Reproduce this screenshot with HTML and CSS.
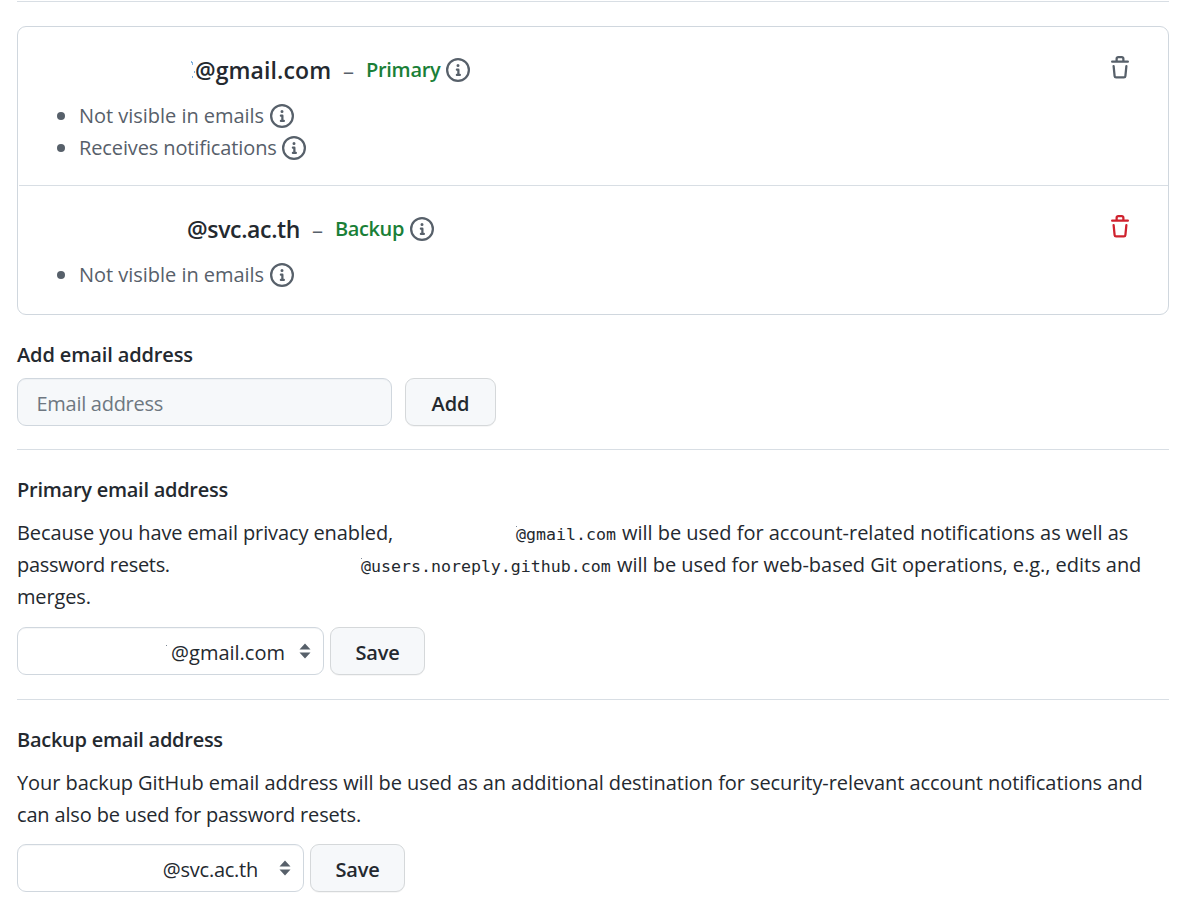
FILE: index.html
```
<!DOCTYPE html>
<html lang="en">
<head>
<meta charset="utf-8">
<title>Email settings</title>
<link rel="stylesheet" href="styles.css">
</head>
<body>
<svg class="symbols" aria-hidden="true">
  <symbol id="info" viewBox="0 0 16 16"><path d="M0 8a8 8 0 1 1 16 0A8 8 0 0 1 0 8Zm8-6.5a6.5 6.5 0 1 0 0 13 6.5 6.5 0 0 0 0-13ZM6.5 7.75A.75.75 0 0 1 7.25 7h1a.75.75 0 0 1 .75.75v2.75h.25a.75.75 0 0 1 0 1.5h-2a.75.75 0 0 1 0-1.5h.25v-2h-.25a.75.75 0 0 1-.75-.75ZM8 6a1 1 0 1 1 0-2 1 1 0 0 1 0 2Z"/></symbol>
  <symbol id="trash" viewBox="0 0 16 16"><path d="M11 1.75V3h2.25a.75.75 0 0 1 0 1.5H2.75a.75.75 0 0 1 0-1.5H5V1.75C5 .784 5.784 0 6.75 0h2.5C10.216 0 11 .784 11 1.75ZM4.496 6.675l.66 6.6a.25.25 0 0 0 .249.225h5.19a.25.25 0 0 0 .249-.225l.66-6.6a.75.75 0 0 1 1.492.149l-.66 6.6A1.748 1.748 0 0 1 10.595 15h-5.19a1.75 1.75 0 0 1-1.741-1.575l-.66-6.6a.75.75 0 1 1 1.492-.15ZM6.5 1.75V3h3V1.75a.25.25 0 0 0-.25-.25h-2.5a.25.25 0 0 0-.25.25Z"/></symbol>
  <symbol id="sort" viewBox="0 0 12 16"><path d="M6 0.5 11.5 6.5H0.5ZM0.5 9.5h11L6 15.5Z"/></symbol>
</svg>
<main class="settings">
  <ul class="emails">
    <li class="email">
      <div class="email-head">
        <svg class="speck speck-title" viewBox="0 0 4 20"><path d="M0 1h1v2H0zM1 2h1v3H1zM3 11h1v2H3zM1 16h1v2H1z"/></svg>
        <span class="address address-gmail">@gmail.com</span>
        <span class="dash">–</span>
        <span class="tag tag-primary">Primary</span>
        <svg class="icon"><use href="#info"/></svg>
        <button class="delete" type="button" aria-label="Delete" disabled><svg class="icon"><use href="#trash"/></svg></button>
      </div>
      <ul class="facts">
        <li><span class="fact fact-visible">Not visible in emails</span><svg class="icon"><use href="#info"/></svg></li>
        <li><span class="fact fact-receives">Receives notifications</span><svg class="icon"><use href="#info"/></svg></li>
      </ul>
    </li>
    <li class="email">
      <div class="email-head">
        <span class="address address-svc">@svc.ac.th</span>
        <span class="dash">–</span>
        <span class="tag tag-backup">Backup</span>
        <svg class="icon"><use href="#info"/></svg>
        <button class="delete danger" type="button" aria-label="Delete"><svg class="icon"><use href="#trash"/></svg></button>
      </div>
      <ul class="facts">
        <li><span class="fact fact-visible">Not visible in emails</span><svg class="icon"><use href="#info"/></svg></li>
      </ul>
    </li>
  </ul>

  <section class="add">
    <h2 class="title-add">Add email address</h2>
    <div class="controls controls-add">
      <input class="field" type="text" placeholder="Email address">
      <button class="btn btn-add" type="button">Add</button>
    </div>
  </section>

  <section class="block">
    <h2 class="title-primary">Primary email address</h2>
    <p class="text"><span class="t1">Because you have email privacy enabled,</span><code class="c1">@gmail.com</code><span class="t2">will be used for account-related notifications as well as</span><br><span class="t3">password resets.</span><code class="c2">@users.noreply.github.com</code><span class="t4">will be used for web-based Git operations, e.g., edits and</span><br><span class="t5">merges.</span></p>
    <div class="controls">
      <div class="select select-gmail"><i class="dot"></i><span class="value">@gmail.com</span><svg class="sort"><use href="#sort"/></svg></div>
      <button class="btn btn-save" type="button">Save</button>
    </div>
  </section>

  <section class="block">
    <h2 class="title-backup">Backup email address</h2>
    <p class="text text-backup"><span class="t6">Your backup GitHub email address will be used as an additional destination for security-relevant account notifications and</span><br><span class="t7">can also be used for password resets.</span></p>
    <div class="controls">
      <div class="select select-svc"><span class="value">@svc.ac.th</span><svg class="sort"><use href="#sort"/></svg></div>
      <button class="btn btn-save" type="button">Save</button>
    </div>
  </section>
</main>
</body>
</html>
```
FILE: styles.css
```
* { box-sizing: border-box; }
body {
  margin: 0;
  background: #fff;
  color: #24292f;
  font-family: "Open Sans", "Noto Sans", sans-serif;
  font-size: 20px;
  line-height: 32px;
  white-space: nowrap;
}
.symbols { display: none; }
ul { list-style: none; margin: 0; padding: 0; }
h2 { margin: 0; font-size: 20px; font-weight: 600; line-height: 32px; }
.title-add { letter-spacing: -.12px; }
.title-primary { letter-spacing: -.26px; }
.title-backup { letter-spacing: -.27px; }
button, input { font: inherit; }

.settings {
  width: 1152px;
  margin: 1px 0 0 17px;
  padding-top: 24px;
  border-top: 1px solid #d8dee4;
}
.icon { width: 24px; height: 24px; fill: #57606a; flex: none; display: block; }

.emails { border: 1px solid #d0d7de; border-radius: 9px; }
.email { margin-left: 1px; padding: 25px 36px 21px 35px; }
.email + .email { padding-bottom: 23px; border-top: 1px solid #d8dee4; }
.email-head { display: flex; align-items: center; height: 36px; margin-bottom: 12px; }
.address { font-size: 23px; font-weight: 600; }
.address-gmail { width: 136px; letter-spacing: .1px; }
.address-svc { width: 113px; margin-left: 133px; letter-spacing: -.35px; }
.speck { fill: #7fb0dc; }
.speck-title { width: 4px; height: 20px; margin-left: 137px; }
.dash { width: 12px; margin: 0 11px 0 12px; color: #57606a; font-size: 22px; }
.tag { color: #1a7f37; font-weight: 600; }
.tag-primary { width: 80px; letter-spacing: -.3px; }
.tag-backup { width: 75px; letter-spacing: -.4px; }
.delete { margin-left: auto; padding: 0; border: 0; background: none; transform: translateY(-2px); }
.danger .icon { fill: #cf222e; }
.facts { padding-left: 3px; color: #57606a; }
.facts li { display: flex; align-items: center; height: 32px; }
.facts li::before { content: ""; width: 8px; height: 8px; margin-right: 14px; border-radius: 50%; background: #57606a; }
.fact-visible { width: 191px; letter-spacing: -.03px; }
.fact-receives { width: 203px; letter-spacing: -.12px; }

.add { padding: 24px 0 23px; }
.controls { display: flex; gap: 6px; height: 48px; }
.controls-add { gap: 13px; margin-top: 7px; }
.field, .select { border: 1px solid #d0d7de; border-radius: 9px; box-shadow: inset 0 1px 0 rgba(208, 215, 222, .2); }
.field { width: 375px; padding: 4px 19px 0 18.5px; background: #f6f8fa; letter-spacing: -.28px; }
.field::placeholder { color: #6e7781; opacity: 1; }
.btn { padding: 4px 0 0; border: 1px solid #d5d8da; border-radius: 9px; background: #f6f8fa; color: #24292f; font-weight: 600; box-shadow: 0 1px 0 rgba(27, 31, 36, .04); }
.btn-add { width: 91px; }
.btn-save { width: 95px; letter-spacing: -.2px; }

.block { padding: 24px 0; border-top: 1px solid #d8dee4; }
.text { margin: 11px 0 14px; }
.text-backup { margin: 11px 0 13px; }
.text span, .text code { display: inline-block; vertical-align: baseline; }
code { font-family: "DejaVu Sans Mono", monospace; font-size: 16.6px; line-height: 20px; }
.t1 { width: 499px; letter-spacing: -.11px; }
.c1 { width: 106px; }
.t2 { letter-spacing: -.02px; }
.t3 { width: 344px; letter-spacing: -.3px; }
.c2 { width: 256px; }
.t4 { letter-spacing: -.03px; }
.t5 { letter-spacing: -.15px; }
.t6 { letter-spacing: -.073px; }
.t7 { letter-spacing: -.16px; }
.c1, .c2 { background: linear-gradient(#7c8794, #7c8794) 0 1px / 1px 1px no-repeat; }

.select { display: flex; align-items: center; justify-content: flex-end; padding: 0 12px 0 0; }
.sort { width: 12px; height: 16px; fill: #57606a; }
.select-gmail { width: 307px; }
.select-svc { width: 287px; letter-spacing: -.25px; }
.value { margin-right: 14px; padding-top: 4px; }
.select-svc .value { margin-right: 21px; }
.dot { width: 1px; height: 1px; margin: 0 4px 12px 0; background: #7c8794; }
```
